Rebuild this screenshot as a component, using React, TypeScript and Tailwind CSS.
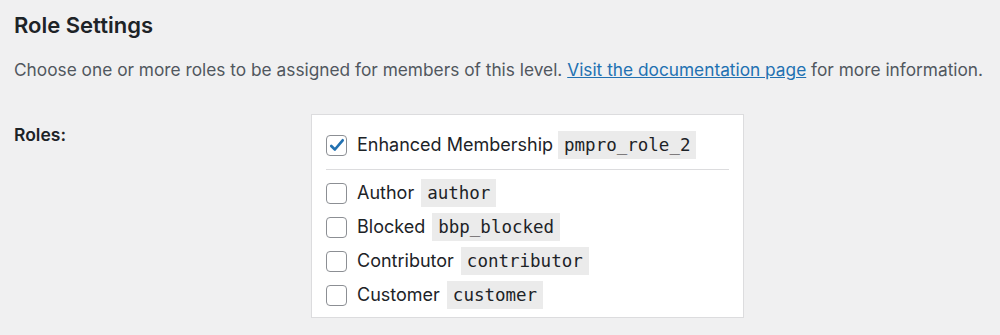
const roles = [
  { name: 'Author', slug: 'author' },
  { name: 'Blocked', slug: 'bbp_blocked' },
  { name: 'Contributor', slug: 'contributor' },
  { name: 'Customer', slug: 'customer' },
];

function Box({ checked }: { checked?: boolean }) {
  return (
    <span className="flex h-[21px] w-[21px] shrink-0 items-center justify-center rounded-[4px] border border-[#8c8f94] bg-white">
      {checked && (
        <svg viewBox="0 0 20 20" className="h-[19px] w-[19px]">
          <path d="M4.5 10.5 L8.3 14.2 L16.5 4.5" fill="none" stroke="#2271b1" strokeWidth="2.8" strokeLinecap="round" strokeLinejoin="round" />
        </svg>
      )}
    </span>
  );
}

function Slug({ children }: { children: string }) {
  return (
    <code className="block bg-[#ebebeb] px-[6px] py-[3px] font-['DejaVu_Sans_Mono',monospace] text-[17.5px] leading-[22px] text-[#1d2327]">
      {children}
    </code>
  );
}

export default function App() {
  return (
    <div className="h-[335px] w-[1000px] bg-[#f0f0f1] px-[14px] pt-[10px] font-['Inter',sans-serif] text-[#1d2327]">
      <h2 className="text-[22px] font-semibold leading-[30px]">Role Settings</h2>

      <p className="mt-[18px] text-[17.3px] leading-[24px] text-[#50575e]">
        Choose one or more roles to be assigned for members of this level.{' '}
        <a href="#" className="text-[#2271b1] underline">Visit the documentation page</a> for more information.
      </p>

      <div className="mt-[32px] flex">
        <div className="w-[297px] pt-[10px] text-[17.5px] font-semibold leading-[22px]">Roles:</div>

        <div className="w-[433px] border border-[#dcdcde] bg-white px-[14px] pb-[8px] pt-[16px]">
          <label className="flex items-center gap-[10px]">
            <Box checked />
            <span className="text-[18px] leading-[28px]">Enhanced Membership</span>
            <span className="-ml-[5px]"><Slug>pmpro_role_2</Slug></span>
          </label>

          <div className="mt-[10px] mb-[9px] border-t border-[#dcdcde]" />

          <div className="flex flex-col gap-[6px]">
            {roles.map((r) => (
              <label key={r.slug} className="flex items-center gap-[10px]">
                <Box />
                <span className="text-[18px] leading-[28px]">{r.name}</span>
                <span className="-ml-[3px]"><Slug>{r.slug}</Slug></span>
              </label>
            ))}
          </div>
        </div>
      </div>
    </div>
  );
}
